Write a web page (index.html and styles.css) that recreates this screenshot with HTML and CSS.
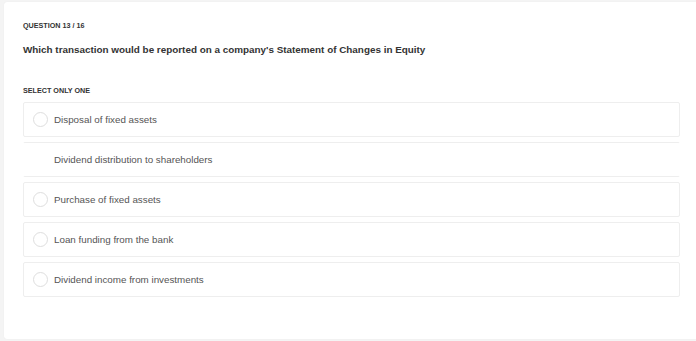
FILE: index.html
```html
<!DOCTYPE html>
<html lang="en">
<head>
    <meta charset="UTF-8">
    <meta name="viewport" content="width=device-width, initial-scale=1.0">
    <title>Question 13 / 16</title>
    <link rel="stylesheet" href="styles.css">
</head>
<body>
    <div class="quiz-card">
        <div class="question-count">Question 13 / 16</div>
        <h1 class="question-text">Which transaction would be reported on a company's Statement of Changes in Equity</h1>

        <div class="select-hint">Select only one</div>
        <div class="options">
            <label class="option">
                <span class="radio"></span>
                <span class="option-text">Disposal of fixed assets</span>
            </label>
            <label class="option option-active">
                <span class="radio"></span>
                <span class="option-text">Dividend distribution to shareholders</span>
            </label>
            <label class="option">
                <span class="radio"></span>
                <span class="option-text">Purchase of fixed assets</span>
            </label>
            <label class="option">
                <span class="radio"></span>
                <span class="option-text">Loan funding from the bank</span>
            </label>
            <label class="option">
                <span class="radio"></span>
                <span class="option-text">Dividend income from investments</span>
            </label>
        </div>
    </div>
</body>
</html>
```

FILE: styles.css
```css
/* Page */
body {
    font-family: "Liberation Sans", Arial, sans-serif;
    background-color: #f4f4f4;
    margin: 0;
    padding: 2px 0 2px 4px;
}

/* Card */
.quiz-card {
    background-color: #fff;
    border-radius: 3px 0 0 3px;
    box-shadow: 0 0 1px rgba(0, 0, 0, 0.08);
    height: 337px;
    box-sizing: border-box;
    padding: 19px 16px 0 19px;
}

.question-count {
    font-size: 7.2px;
    font-weight: bold;
    text-transform: uppercase;
    color: #333;
}

.question-text {
    font-size: 9.9px;
    font-weight: bold;
    color: #333;
    margin: 14px 0 0 0;
}

.select-hint {
    font-size: 7.2px;
    font-weight: bold;
    text-transform: uppercase;
    color: #333;
    margin-top: 31px;
}

/* Options */
.options {
    display: flex;
    flex-direction: column;
    gap: 5px;
    margin-top: 7px;
}

.option {
    display: flex;
    align-items: center;
    gap: 6px;
    height: 35px;
    box-sizing: border-box;
    padding-left: 9px;
    border: 1px solid #eee;
    border-radius: 2px;
    cursor: pointer;
}

.radio {
    width: 15px;
    height: 15px;
    border: 1px solid #dedede;
    border-radius: 50%;
    box-sizing: border-box;
}

.option-text {
    font-size: 9.8px;
    color: #555;
}

.option-active {
    border-left-color: transparent;
    border-right-color: transparent;
}

.option-active .radio {
    visibility: hidden;
}
```
